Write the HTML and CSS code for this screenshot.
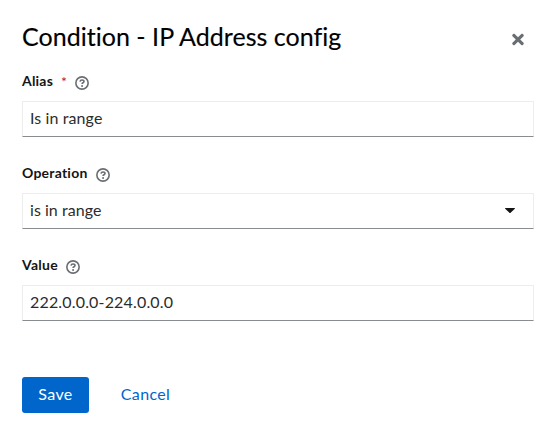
FILE: index.html
```html
<!DOCTYPE html>
<html lang="en">
<head>
<meta charset="utf-8">
<title>Condition - IP Address config</title>
<link rel="stylesheet" href="styles.css">
</head>
<body>
<svg class="defs" aria-hidden="true">
  <symbol id="help" viewBox="0 0 14 14">
    <circle cx="7" cy="7" r="6.15" fill="none" stroke="currentColor" stroke-width="1.6"/>
    <path d="M5 5.600C5.200 4.400 6 4.050 7 4.050c1.200 0 2 .6 2 1.500 0 1.250-1.850 1.200-1.950 2.400" fill="none" stroke="currentColor" stroke-width="1.600"/>
    <circle cx="7.050" cy="9.900" r="1" fill="currentColor"/>
  </symbol>
</svg>
<main class="modal">
  <header class="header">
    <h1 class="title">Condition - IP Address config</h1>
    <button class="close" aria-label="Close">
      <svg viewBox="0 0 352 512" width="12" height="17"><path fill="currentColor" d="M242.720 256l100.070-100.070c12.280-12.280 12.280-32.190 0-44.480l-22.240-22.240c-12.280-12.280-32.190-12.280-44.480 0L176 189.280 75.930 89.210c-12.280-12.280-32.190-12.280-44.480 0L9.210 111.450c-12.280 12.280-12.280 32.190 0 44.480L109.280 256 9.210 356.070c-12.280 12.280-12.280 32.190 0 44.480l22.240 22.240c12.280 12.280 32.200 12.280 44.480 0L176 322.720l100.070 100.070c12.280 12.280 32.200 12.280 44.480 0l22.240-22.240c12.280-12.280 12.280-32.190 0-44.480L242.720 256z"/></svg>
    </button>
  </header>
  <form class="form">
    <div class="group">
      <div class="label"><label class="alias">Alias</label><span class="required">*</span><svg class="help"><use href="#help"/></svg></div>
      <div class="control"><span class="range capital">Is in range</span></div>
    </div>
    <div class="group">
      <div class="label"><label class="operation">Operation</label><svg class="help"><use href="#help"/></svg></div>
      <div class="control"><span class="range">is in range</span><svg class="caret" viewBox="0 0 10 5"><path fill="currentColor" d="M.5 0h9c.5 0 .6.5.3.8L5.600 4.750q-.6.5-1.200 0L.2.8C-.1.5 0 0 .5 0z"/></svg></div>
    </div>
    <div class="group">
      <div class="label"><label class="value">Value</label><svg class="help"><use href="#help"/></svg></div>
      <div class="control"><span class="address">222.0.0.0-224.0.0.0</span></div>
    </div>
  </form>
  <footer class="actions">
    <button class="save" type="button">Save</button>
    <button class="cancel" type="button">Cancel</button>
  </footer>
</main>
</body>
</html>
```
FILE: styles.css
```css
* { box-sizing: border-box; }
body { margin: 0; background: #fff; color: #151515; font: 16px/24px Lato, "Open Sans", sans-serif; }
button { padding: 0; border: 0; background: none; font: inherit; }
.defs { position: absolute; width: 0; height: 0; }
.modal { padding: 22px 21px 0 22px; }
.header { display: flex; justify-content: space-between; height: 50px; }
.title { margin: -1px 0 0; font-size: 25px; font-weight: 400; line-height: 31px; letter-spacing: .03px; color: #000; -webkit-text-stroke: .15px #000; white-space: nowrap; }
.close { display: flex; align-items: center; justify-content: center; width: 33px; height: 34px; color: #6a6e73; }
.group { height: 92px; }
.label { display: flex; align-items: center; height: 20px; margin-bottom: 9px; font-size: 14px; font-weight: 700; }
.label label { line-height: 20px; margin-top: -2px; color: #151515; }
.alias { letter-spacing: .2px; }
.operation { letter-spacing: .23px; }
.value { letter-spacing: .25px; }
.required { margin: 0 0 0 8px; color: #c9190b; font-weight: 400; line-height: 20px; }
.help { width: 14px; height: 14px; margin: 2px 0 0 8px; color: #6a6e73; }
.control { display: flex; align-items: center; justify-content: space-between; height: 36px; padding: 0 18px 0 7px; border: 1px solid #ededed; border-bottom-color: #8a8d90; }
.control span { margin-top: -2px; color: #2c2c2c; }
.range { letter-spacing: .04px; }
.capital { letter-spacing: .1px; }
.address { letter-spacing: .17px; }
.caret { width: 10px; height: 5px; margin-top: -1px; }
.actions { display: flex; gap: 16px; padding-top: 29px; }
.save, .cancel { height: 36px; padding-bottom: 2px; }
.save { width: 67px; border-radius: 3px; background: #06c; color: #fff; letter-spacing: .4px; }
.cancel { width: 81px; color: #06c; letter-spacing: .35px; }
```
